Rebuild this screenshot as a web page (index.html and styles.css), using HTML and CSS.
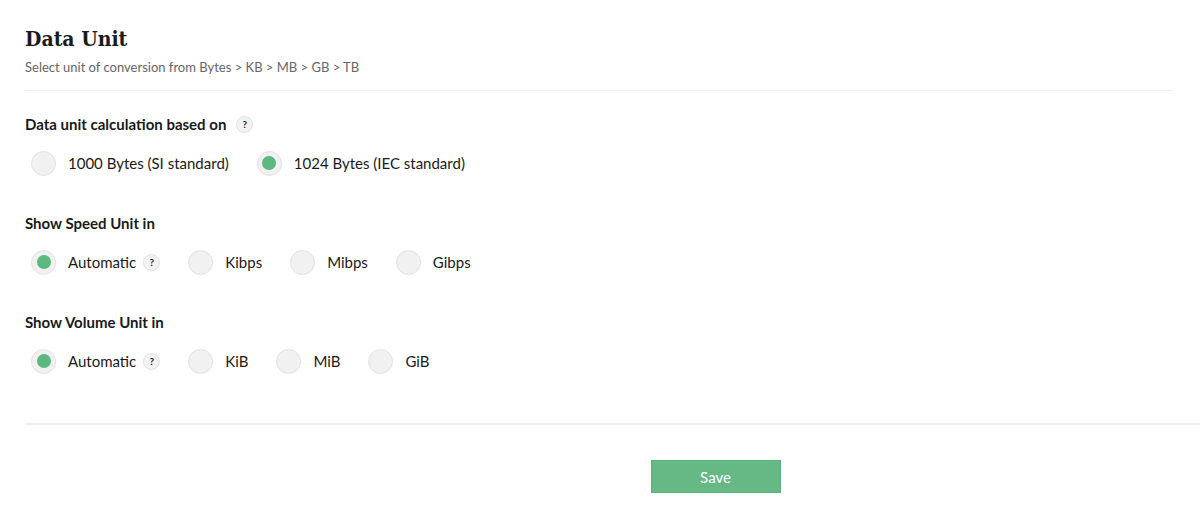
FILE: index.html
```html
<!DOCTYPE html>
<html>
<head>
<meta charset="utf-8">
<link rel="stylesheet" href="styles.css">
</head>
<body>
<div class="page">
  <header class="head">
    <h1 class="title">Data Unit</h1>
    <p class="subtitle">Select unit of conversion from Bytes &gt; KB &gt; MB &gt; GB &gt; TB</p>
  </header>
  <section class="group g1">
    <div class="label">Data unit calculation based on <span class="help">?</span></div>
    <div class="options">
      <div class="opt"><span class="radio"></span><span>1000 Bytes (SI standard)</span></div>
      <div class="opt"><span class="radio on"></span><span>1024 Bytes (IEC standard)</span></div>
    </div>
  </section>
  <section class="group">
    <div class="label">Show Speed Unit in</div>
    <div class="options">
      <div class="opt"><span class="radio on"></span><span>Automatic</span><span class="help">?</span></div>
      <div class="opt"><span class="radio"></span><span>Kibps</span></div>
      <div class="opt"><span class="radio"></span><span>Mibps</span></div>
      <div class="opt"><span class="radio"></span><span>Gibps</span></div>
    </div>
  </section>
  <section class="group">
    <div class="label">Show Volume Unit in</div>
    <div class="options">
      <div class="opt"><span class="radio on"></span><span>Automatic</span><span class="help">?</span></div>
      <div class="opt"><span class="radio"></span><span>KiB</span></div>
      <div class="opt"><span class="radio"></span><span>MiB</span></div>
      <div class="opt"><span class="radio"></span><span>GiB</span></div>
    </div>
  </section>
  <footer class="foot">
    <button class="save">Save</button>
  </footer>
</div>
</body>
</html>
```
FILE: styles.css
```css
* { box-sizing: border-box; }
html, body { margin: 0; padding: 0; background: #fff; }
body { font-family: Lato, "Open Sans", sans-serif; color: #222; }
.page { padding-top: 26px; }
.head { margin: 0 27px 0 25px; border-bottom: 1px solid #efefef; padding-bottom: 15px; }
.title { margin: 0; font-family: "DejaVu Serif", serif; font-stretch: condensed; font-weight: 700; font-size: 21px; line-height: 26px; color: #1a1a1a; }
.subtitle { margin: 7px 0 0; font-size: 13px; line-height: 16px; color: #666; }
.group { padding-left: 25px; }
.g1 { margin-top: 22px; }
.group + .group { margin-top: 36px; }
.label { font-weight: 700; font-size: 15px; line-height: 22px; color: #1a1a1a; display: flex; align-items: center; gap: 10px; }
.options { display: flex; align-items: center; gap: 28px; margin-top: 15px; padding-left: 6px; }
.opt { display: flex; align-items: center; font-size: 15px; color: #1a1a1a; height: 26px; }
.radio { width: 25px; height: 25px; border-radius: 50%; background: #f1f1f1; border: 1px solid #e2e2e2; margin-right: 12px; display: flex; align-items: center; justify-content: center; flex: none; }
.radio.on::after { content: ""; width: 14px; height: 14px; border-radius: 50%; background: #5cb87f; }
.help { width: 17px; height: 17px; border-radius: 50%; background: #f2f2f2; border: 1px solid #e0e0e0; font-size: 10px; font-weight: 700; color: #222; display: inline-flex; align-items: center; justify-content: center; flex: none; }
.opt .help { margin-left: 7px; }
.foot { margin-top: 49px; margin-left: 25px; border-top: 2px solid #efefef; display: flex; justify-content: center; padding-top: 35px; padding-left: 206px; }
.save { width: 130px; height: 33px; background: #66b985; border: 1px solid #5cb07c; color: #fff; font-family: Lato, sans-serif; font-size: 15px; padding: 0; }
```
